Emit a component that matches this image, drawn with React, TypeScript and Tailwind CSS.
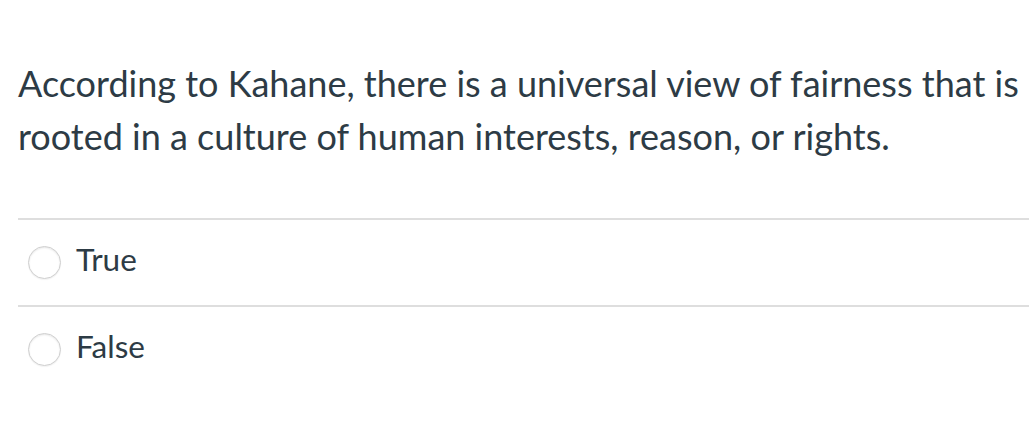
export default function App() {
  const options = ['True', 'False'];

  return (
    <div className="w-[1036px] h-[432px] bg-white font-['Lato',sans-serif] text-[#2d3b45]">
      <div className="pl-[18px] pr-[7px] pt-[57px]">
        <p className="text-[36px] leading-[53px]">
          According to Kahane, there is a universal view of fairness that is rooted in a culture of
          human interests, reason, or rights.
        </p>
        <div className="mt-[55px]">
          {options.map((opt) => (
            <div key={opt} className="flex items-center gap-[15px] h-[87px] border-t-2 border-[#dedede] pl-[10px]">
              <span className="w-[33px] h-[33px] rounded-full border border-[#cfcfcf] bg-white shadow-[inset_0_1px_2px_rgba(0,0,0,0.1),0_1px_1px_rgba(0,0,0,0.05)]" />
              <span className="text-[31.5px] leading-none mb-[6px]">{opt}</span>
            </div>
          ))}
        </div>
      </div>
    </div>
  );
}
